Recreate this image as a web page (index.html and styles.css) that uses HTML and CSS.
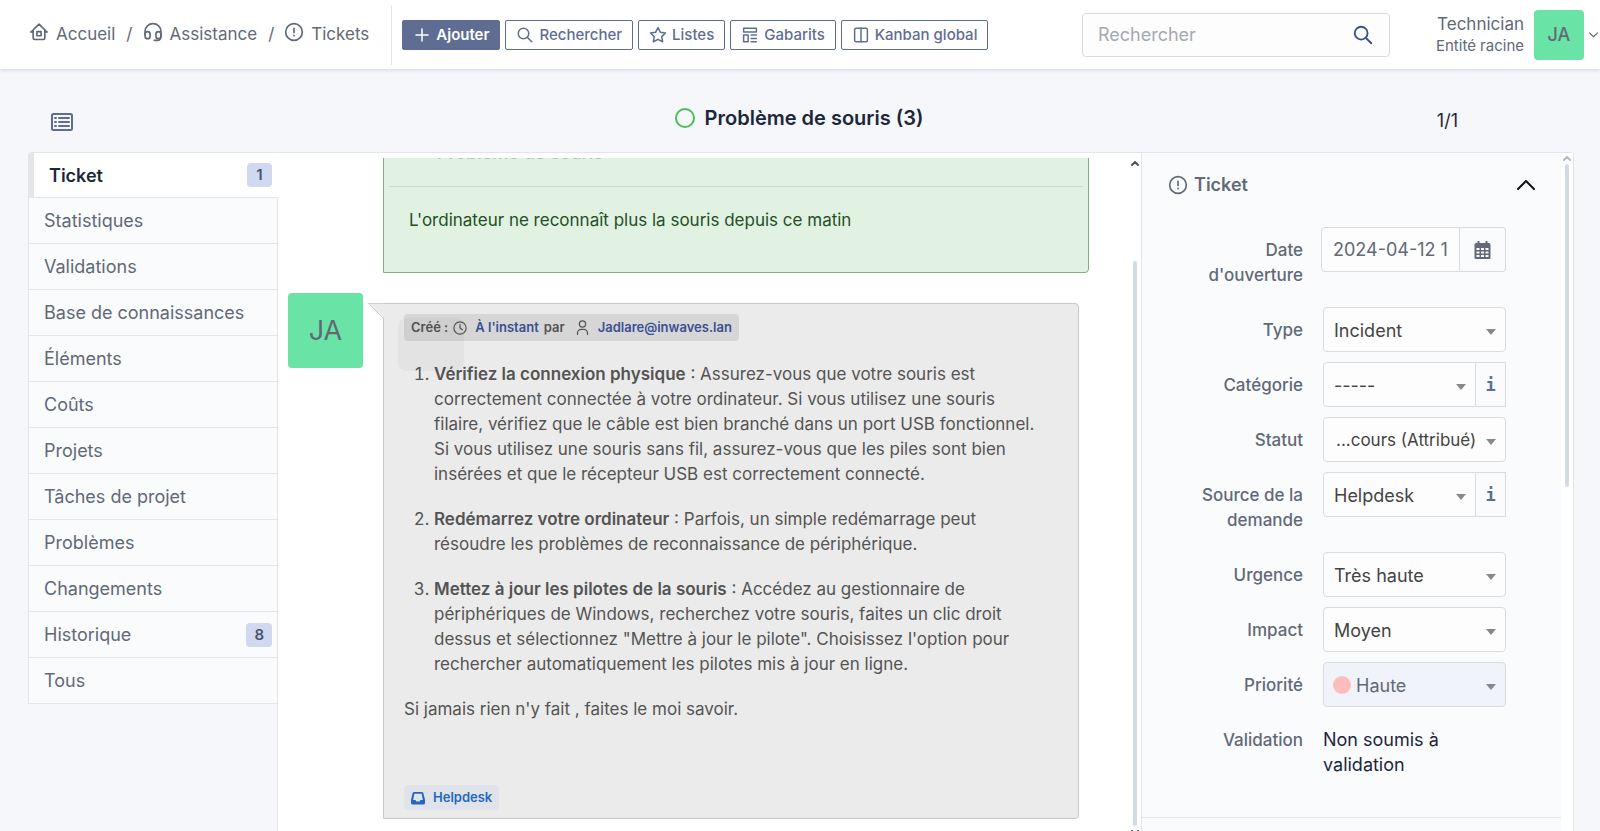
FILE: index.html
```html
<!DOCTYPE html>
<html lang="fr">
<head>
<meta charset="utf-8">
<meta name="viewport" content="width=device-width, initial-scale=1">
<title>Problème de souris (3)</title>
<link rel="stylesheet" href="styles.css">
</head>
<body>
<svg class="sprite" aria-hidden="true">
  <symbol id="i-alert" viewBox="0 0 24 24"><circle cx="12" cy="12" r="10"/><path d="M12 7.500v5M12 16v.4"/></symbol>
  <symbol id="i-search" viewBox="0 0 24 24"><circle cx="10" cy="10" r="7"/><path d="M21 21l-6-6"/></symbol>
</svg>
<div class="app">
  <header class="topbar">
    <nav class="breadcrumb" aria-label="Fil d'Ariane">
      <a href="#"><svg class="icon" viewBox="0 0 24 24"><path d="M19 9.500V19a2 2 0 0 1-2 2H7a2 2 0 0 1-2-2V9.500M2 12h3M22 12h-3M2.500 12L12 2.500 21.500 12"/><rect x="9.500" y="11.500" width="5" height="5"/></svg>Accueil</a>
      <span class="slash">/</span>
      <a href="#"><svg class="icon" viewBox="0 0 24 24"><rect x="2.500" y="11.500" width="6" height="8.500" rx="3"/><rect x="15.500" y="11.500" width="6" height="8.500" rx="3"/><path d="M2.500 15v-4a9.500 9 0 0 1 19 0V18a4 4 0 0 1-4 4h-4"/></svg>Assistance</a>
      <span class="slash">/</span>
      <a href="#"><svg class="icon"><use href="#i-alert"/></svg>Tickets</a>
    </nav>
    <div class="actions">
      <button class="btn btn-primary" type="button"><svg class="icon" viewBox="0 0 24 24"><path d="M12 4v16M4 12h16"/></svg>Ajouter</button>
      <button class="btn" type="button"><svg class="icon"><use href="#i-search"/></svg>Rechercher</button>
      <button class="btn" type="button"><svg class="icon" viewBox="0 0 24 24"><path d="M12 17.750l-6.170 3.240 1.180-6.870-5-4.870 6.900-1L12 2l3.090 6.250 6.900 1-5 4.870 1.180 6.870z"/></svg>Listes</button>
      <button class="btn" type="button"><svg class="icon" viewBox="0 0 24 24"><rect x="3.500" y="3" width="17" height="5"/><rect x="3.500" y="12" width="6" height="9"/><path d="M13.500 12h7M13.500 16.500h7M13.500 21h7"/></svg>Gabarits</button>
      <button class="btn" type="button"><svg class="icon" viewBox="0 0 24 24"><rect x="3.500" y="3" width="17" height="18" rx="2"/><path d="M12 3v18"/></svg>Kanban global</button>
    </div>
    <form class="search">
      <input type="search" placeholder="Rechercher" aria-label="Rechercher">
      <button type="button" aria-label="Lancer la recherche"><svg class="icon"><use href="#i-search"/></svg></button>
    </form>
    <a class="user" href="#">
      <span class="user-text"><span>Technician</span><small>Entité racine</small></span>
      <span class="avatar avatar-sm">JA</span>
      <svg class="caret" viewBox="0 0 8 8"><path d="M.5 2.500L4 6l3.500-3.500"/></svg>
    </a>
  </header>

  <div class="titlebar">
    <button class="list-toggle" type="button" aria-label="Afficher la liste"><svg viewBox="0 0 22 18"><rect x="1" y="1" width="20" height="16" rx="1.500"/><path d="M8 5h10M8 9h10M8 13h10M4 5h1M4 9h1M4 13h1"/></svg></button>
    <h1><span class="status"></span>Problème de souris (3)</h1>
    <span class="pager">1/1</span>
  </div>

  <main class="layout">
    <nav class="tabs" aria-label="Onglets">
      <a class="active" href="#">Ticket<span class="badge">1</span></a>
      <a href="#">Statistiques</a>
      <a href="#">Validations</a>
      <a href="#">Base de connaissances</a>
      <a href="#">Éléments</a>
      <a href="#">Coûts</a>
      <a href="#">Projets</a>
      <a href="#">Tâches de projet</a>
      <a href="#">Problèmes</a>
      <a href="#">Changements</a>
      <a href="#">Historique<span class="badge">8</span></a>
      <a href="#">Tous</a>
    </nav>

    <div class="card">
      <section class="timeline">
        <div class="feed">
          <article class="entry request">
            <h2>Problème de souris</h2>
            <p>L'ordinateur ne reconnaît plus la souris depuis ce matin</p>
          </article>
          <div class="row">
            <span class="avatar avatar-lg">JA</span>
            <article class="entry answer">
              <svg class="pointer" viewBox="0 0 16 16"><path class="fill" d="M0 0H17V16z"/><path d="M0 .5H17M0 0L16 16"/></svg>
              <div class="meta">Créé : <svg class="icon" viewBox="0 0 24 24"><circle cx="12" cy="12" r="10.500"/><path d="M12 6v6l4 3"/></svg><a href="#">À l'instant</a> par <svg class="icon person" viewBox="0 0 24 24"><circle cx="12" cy="6.500" r="5"/><path d="M4 23v-2a6 6 0 0 1 6-6h4a6 6 0 0 1 6 6v2"/></svg><a href="#">Jadlare@inwaves.lan</a></div>
              <ol>
                <li><strong>Vérifiez la connexion physique</strong> : Assurez-vous que votre souris est correctement connectée à votre ordinateur. Si vous utilisez une souris filaire, vérifiez que le câble est bien branché dans un port USB fonctionnel. Si vous utilisez une souris sans fil, assurez-vous que les piles sont bien insérées et que le récepteur USB est correctement connecté.</li>
                <li><strong>Redémarrez votre ordinateur</strong> : Parfois, un simple redémarrage peut résoudre les problèmes de reconnaissance de périphérique.</li>
                <li><strong>Mettez à jour les pilotes de la souris</strong> : Accédez au gestionnaire de périphériques de Windows, recherchez votre souris, faites un clic droit dessus et sélectionnez "Mettre à jour le pilote". Choisissez l'option pour rechercher automatiquement les pilotes mis à jour en ligne.</li>
              </ol>
              <p>Si jamais rien n'y fait , faites le moi savoir.</p>
              <span class="source"><svg viewBox="0 0 14 14"><path fill-rule="evenodd" d="M3 1h8a1.500 1.500 0 0 1 1.500 1.500L14 9v3a1.500 1.500 0 0 1-1.500 1.500h-11A1.500 1.500 0 0 1 0 12V9l1.500-6.500A1.500 1.500 0 0 1 3 1zm.3 1.700L2.200 9h2.300l1 1.500h3l1-1.500h2.300l-1.100-6.300z"/></svg>Helpdesk</span>
            </article>
          </div>
        </div>
        <div class="scrollbar" aria-hidden="true"><svg viewBox="0 0 8 6"><path d="M1 5l3-3 3 3"/></svg><span class="thumb thumb-low"></span><svg class="down" viewBox="0 0 8 6"><path d="M1 1l3 3 3-3"/></svg></div>
      </section>

      <aside class="panel">
        <div class="panel-body">
          <h2><svg class="icon"><use href="#i-alert"/></svg>Ticket<button type="button" aria-label="Replier"><svg viewBox="0 0 18 10"><path d="M1 9l8-8 8 8"/></svg></button></h2>
          <form class="fields">
            <label for="date">Date d'ouverture</label>
            <div class="group group-date"><input id="date" type="text" value="2024-04-12 1"><button type="button" aria-label="Calendrier"><svg class="calendar" viewBox="0 0 16 18"><path fill-rule="evenodd" d="M3 0h2v2h6V0h2v2h1.500A1.500 1.500 0 0 1 16 3.500v13a1.500 1.500 0 0 1-1.500 1.500h-13A1.500 1.500 0 0 1 0 16.500v-13A1.500 1.500 0 0 1 1.500 2H3zM2 7v2h3V7zm4.500 0v2h3V7zM11 7v2h3V7zM2 10.500v2h3v-2zm4.500 0v2h3v-2zm4.500 0v2h3v-2zM2 14v2h3v-2zm4.500 0v2h3v-2zm4.500 0v2h3v-2z"/></svg></button></div>

            <label for="type">Type</label>
            <div class="group"><span class="select"><select id="type"><option>Incident</option></select></span></div>

            <label for="cat">Catégorie</label>
            <div class="group"><span class="select"><select id="cat"><option>-----</option></select></span><button class="info" type="button">i</button></div>

            <label for="statut">Statut</label>
            <div class="group"><span class="select"><select id="statut" class="long"><option>...cours (Attribué)</option></select></span></div>

            <label for="src">Source de la demande</label>
            <div class="group"><span class="select"><select id="src"><option>Helpdesk</option></select></span><button class="info" type="button">i</button></div>

            <label for="urg">Urgence</label>
            <div class="group"><span class="select"><select id="urg"><option>Très haute</option></select></span></div>

            <label for="imp">Impact</label>
            <div class="group"><span class="select"><select id="imp"><option>Moyen</option></select></span></div>

            <label for="prio">Priorité</label>
            <div class="group"><span class="select dotted"><select id="prio" disabled><option>Haute</option></select></span></div>

            <span class="label">Validation</span>
            <div class="static">Non soumis à validation</div>
          </form>
        </div>
        <div class="scrollbar scrollbar-light" aria-hidden="true"><svg viewBox="0 0 8 6"><path d="M1 5l3-3 3 3"/></svg><span class="thumb thumb-high"></span></div>
      </aside>
    </div>
  </main>
</div>
</body>
</html>
```
FILE: styles.css
```css
:root {
  --text: #626976;
  --dark: #1d273b;
  --line: #e4e5e8;
  --field: #d9dbde;
  --brand: #5f6d92;
  --link: #3a4f93;
  --mint: #6ae4a6;
}

* { box-sizing: border-box; }

body {
  margin: 0;
  background: #f5f7fb;
  color: var(--text);
  font: 18px/25px Inter, "Noto Sans", sans-serif;
}

a { color: inherit; text-decoration: none; }
button, input, select { font: inherit; color: inherit; margin: 0; }
h1, h2, p, ol { margin: 0; }

.sprite { position: absolute; width: 0; height: 0; }

svg { fill: none; stroke: currentColor; stroke-linecap: round; stroke-linejoin: round; flex: none; }
.icon { width: 20px; height: 20px; stroke-width: 2; }

.app { height: 100vh; display: flex; flex-direction: column; overflow: hidden; }

/* Top bar */
.topbar {
  display: flex;
  align-items: center;
  height: 69px;
  flex: none;
  padding-left: 29px;
  background: #fff;
  box-shadow: 0 1px 4px rgba(30, 40, 60, .16);
}
.breadcrumb {
  display: flex;
  align-items: center;
  gap: 8px;
  height: 60px;
  padding-right: 22px;
  border-right: 1px solid var(--line);
  font-size: 17px;
}
.breadcrumb a { display: flex; gap: 7px; }
.breadcrumb .slash { padding: 0 2px 0 3px; }

.actions { display: flex; gap: 5px; margin-left: 10px; }
.btn {
  display: flex;
  align-items: center;
  gap: 5px;
  height: 30px;
  padding: 0 10px;
  border: 1px solid var(--brand);
  border-radius: 2px;
  background: #fff;
  color: var(--brand);
  font-size: 15px;
  font-weight: 500;
  white-space: nowrap;
}
.btn .icon { width: 18px; height: 18px; }
.btn-primary { background: var(--brand); color: #fff; font-weight: 600; }

.search {
  display: flex;
  width: 308px;
  height: 44px;
  margin-left: auto;
  border: 1px solid var(--field);
  border-radius: 4px;
  background: #fdfdfd;
}
.search input {
  flex: 1;
  min-width: 0;
  padding: 0 15px;
  border: 0;
  background: transparent;
}
.search input::placeholder { color: #a5a9b1; opacity: 1; }
.search button { width: 52px; padding: 0; border: 0; background: transparent; color: var(--link); }
.search .icon { display: block; width: 22px; height: 22px; margin: 0 auto; }

.user { display: flex; align-items: center; margin-left: 46px; padding-right: 2px; }
.user-text { display: flex; flex-direction: column; text-align: right; font-size: 17px; line-height: 22px; margin-right: 10px; }
.user-text small { font-size: 15px; }
.caret { width: 9px; height: 9px; margin-left: 5px; }

.avatar {
  display: flex;
  align-items: center;
  justify-content: center;
  flex: none;
  border-radius: 4px;
  background: var(--mint);
  color: var(--text);
  font-weight: 500;
}
.avatar-sm { width: 50px; height: 50px; }
.avatar-lg { width: 75px; height: 75px; font-size: 27px; font-weight: 400; }

/* Title row */
.titlebar {
  display: grid;
  grid-template-columns: 1fr auto 1fr;
  align-items: center;
  flex: none;
  height: 83px;
  padding: 15px 30px 0 28px;
}
.list-toggle { justify-self: start; margin: 8px 0 0 23px; padding: 0; border: 0; background: none; color: var(--brand); display: flex; }
.list-toggle svg { width: 22px; height: 18px; stroke-width: 2; }
h1 { display: flex; align-items: center; gap: 10px; color: var(--dark); font-size: 20px; font-weight: 600; }
.status { width: 20px; height: 20px; border: 2px solid #4dbd57; border-radius: 50%; }
.pager { justify-self: end; padding: 4px 112px 0 0; color: var(--dark); }

/* Body */
.layout { display: flex; flex: 1; min-height: 0; padding: 0 26px 0 28px; }
.tabs { position: relative; z-index: 1; width: 250px; flex: none; margin-right: -1px; align-self: flex-start; }
.tabs a {
  display: flex;
  align-items: center;
  justify-content: space-between;
  height: 46px;
  padding: 0 5px 0 15px;
  border: solid var(--line);
  border-width: 0 1px 1px;
  background: #fafbfd;
}
.tabs .active {
  border-top-width: 1px;
  border-left-width: 6px;
  border-right-color: #fff;
  border-top-left-radius: 4px;
  background: #fff;
  color: var(--dark);
  font-weight: 600;
}
.badge {
  min-width: 25px;
  padding: 0 8px;
  border-radius: 4px;
  background: #d1d9f0;
  color: #47536f;
  font-size: 15px;
  font-weight: 600;
  line-height: 24px;
  text-align: center;
}

.card {
  display: flex;
  flex: 1;
  min-width: 0;
  border: solid var(--line);
  border-width: 1px 1px 0;
  border-top-right-radius: 4px;
  background: #fff;
}

.timeline { display: flex; flex: 1; min-width: 0; padding-top: 5px; }
.feed {
  display: flex;
  flex-direction: column;
  justify-content: flex-end;
  flex: 1;
  min-width: 0;
  overflow: hidden;
  padding: 0 40px 12px 10px;
  font-size: 17px;
}
.entry { border: 1px solid #c8c9cb; border-radius: 4px; }
.request {
  margin-left: 95px;
  padding: 0 5px 39px;
  border-color: #86ad8a;
  border-bottom-left-radius: 0;
  background: #e1f2e3;
  color: #1f4f24;
}
.request h2 {
  padding: 10px 48px 21px;
  border-bottom: 1px solid #cbdccf;
  color: #a9c2ad;
  font-size: 18px;
  font-weight: 500;
}
.request p { padding: 21px 20px 0; }

.row { display: flex; align-items: flex-start; gap: 20px; margin: 20px 10px 0 0; }
.answer {
  position: relative;
  flex: 1;
  min-width: 0;
  margin-top: 10px;
  padding: 10px 20px 8px;
  border-top-left-radius: 0;
  border-bottom-left-radius: 0;
  background: #ebebeb;
  color: #545454;
}
.answer::before {
  content: "";
  position: absolute;
  top: 14px;
  left: 14px;
  width: 66px;
  height: 53px;
  border-radius: 8px;
  background: rgba(0, 0, 0, .03);
}
.pointer { position: absolute; top: -1px; left: -16px; width: 16px; height: 16px; stroke: #d0d0d0; }
.pointer .fill { fill: #ebebeb; stroke: none; }
.meta {
  display: flex;
  align-items: center;
  gap: 5px;
  width: fit-content;
  height: 27px;
  padding: 0 7px;
  border-radius: 4px;
  background: #d6d6d6;
  font-size: 13px;
  font-weight: 600;
}
.meta a { color: var(--link); }
.meta .icon { width: 14px; height: 14px; margin-right: 3px; }
.meta .person { width: 15px; height: 15px; margin-left: 5px; }
.answer ol { margin-top: 21px; padding: 0 14px 0 30px; }
.answer li { margin-bottom: 20px; }
.answer strong { font-weight: 600; }
.source {
  display: flex;
  align-items: center;
  gap: 8px;
  width: fit-content;
  height: 25px;
  margin-top: 63px;
  padding: 0 7px;
  border-radius: 4px;
  background: #e0e4ea;
  color: #2567c0;
  font-size: 13px;
  font-weight: 600;
}
.source svg { width: 14px; height: 14px; fill: currentColor; stroke: none; }

.scrollbar { display: flex; flex-direction: column; align-items: center; flex: none; width: 12px; color: #505050; }
.scrollbar svg { width: 8px; height: 6px; stroke-width: 2; margin-top: 2px; }
.scrollbar .down { margin: 4px 0 -5px; }
.thumb { width: 4px; border-radius: 2px; background: #d2dbe3; }
.thumb-low { flex: 1; margin-top: 95px; }
.scrollbar-light { color: #b8b8b8; background: #fff; }
.thumb-high { height: 323px; margin-top: 3px; }

/* Side panel */
.panel { display: flex; flex: none; width: 432px; border-left: 1px solid var(--line); }
.panel-body { flex: 1; min-width: 0; overflow: hidden; background: #fafbfd; }
.panel h2 {
  display: flex;
  align-items: center;
  gap: 6px;
  padding: 19px 26px 0;
  font-size: 18px;
  font-weight: 600;
}
.panel h2 button { display: flex; margin-left: auto; padding: 0; border: 0; background: none; color: #111; }
.panel h2 button svg { width: 18px; height: 10px; stroke-width: 2; }
.fields {
  display: grid;
  grid-template-columns: 1fr 183px;
  column-gap: 20px;
  row-gap: 10px;
  padding: 30px 55px 30px 48px;
  border-bottom: 1px solid var(--line);
}
.fields label, .label { padding: 11px 0 9px; text-align: right; font-size: 17px; font-weight: 500; }
.group { display: flex; height: 45px; }
.group-date { margin-left: -2px; }
.group input, .select select {
  width: 100%;
  height: 45px;
  min-width: 0;
  border: 1px solid var(--field);
  border-radius: 4px;
  background: #fdfdfd;
}
.group input { flex: 1; padding: 0 8px 0 11px; border-radius: 4px 0 0 4px; }
.group button {
  display: flex;
  align-items: center;
  justify-content: center;
  width: 46px;
  padding: 0;
  border: 1px solid var(--field);
  border-left: 0;
  border-radius: 0 4px 4px 0;
  background: #fafbfd;
}
.calendar { width: 17px; height: 18px; fill: currentColor; stroke: none; }
.group .info { width: 30px; border-radius: 0; color: var(--brand); font: 600 17px "DejaVu Sans Mono", monospace; }
.select { position: relative; flex: 1; min-width: 0; }
.select select { padding: 1px 24px 0 10px; appearance: none; color: #444; }
.select .long { padding: 1px 20px 0 12px; font-size: 17px; }
.select::after {
  content: "";
  position: absolute;
  top: 22px;
  right: 10px;
  border: solid transparent;
  border-width: 6px 5px 0;
  border-top-color: #888;
  pointer-events: none;
}
.select:not(:last-child) select { border-radius: 4px 0 0 4px; }
.select.dotted select { padding-left: 32px; background: #f0f3f9; color: var(--text); opacity: 1; }
.dotted::before {
  content: "";
  position: absolute;
  top: 14px;
  left: 10px;
  width: 18px;
  height: 18px;
  border-radius: 50%;
  background: #ffbcbc;
}
.static { padding: 10px 0; color: var(--dark); }
```
